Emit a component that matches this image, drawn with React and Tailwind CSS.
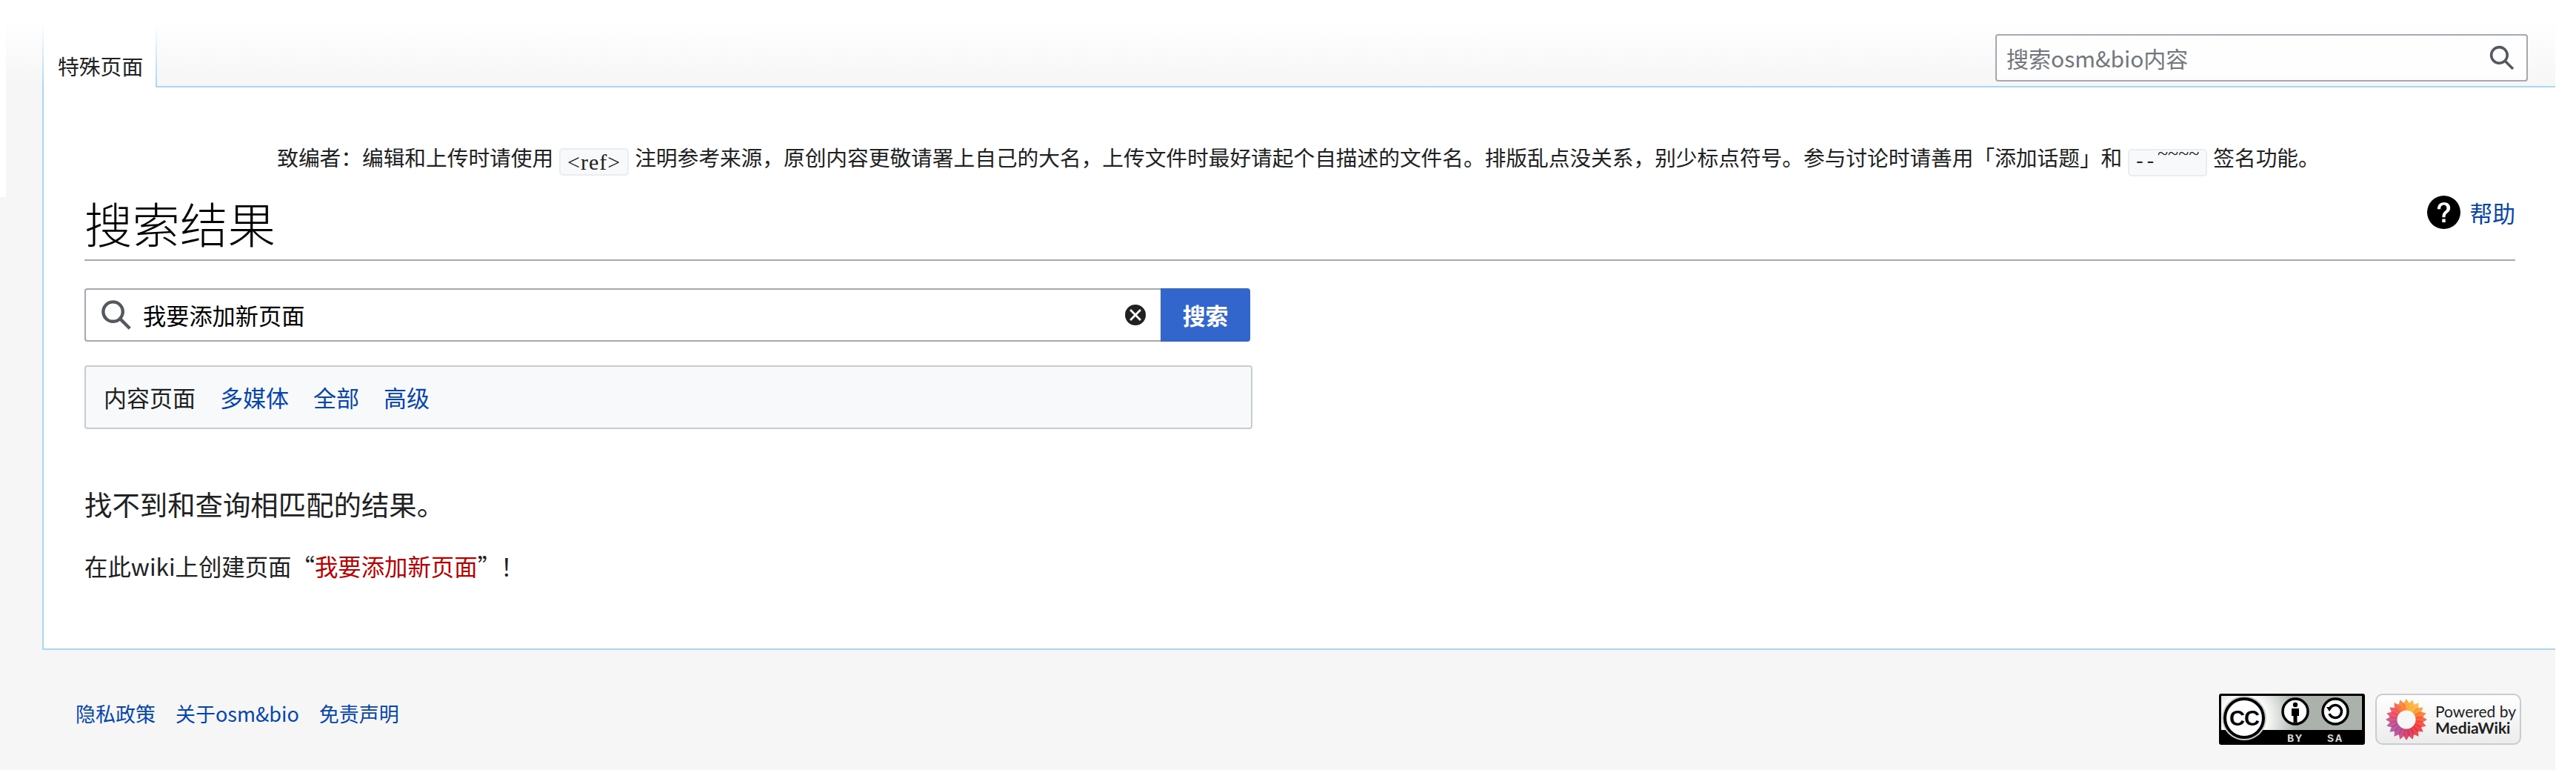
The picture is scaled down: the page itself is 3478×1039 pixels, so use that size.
const petalColors = [
  '#ff9a2e', '#ffac32', '#ffb23a', '#fb9a2c', '#f8742c', '#f5582f', '#f2433a', '#ee3640', '#e8343f', '#dd3350',
  '#d23460', '#c83f78', '#b9478f', '#ad4c99', '#b94a90', '#cc4a7f', '#e2476a', '#f04a55', '#f55c42', '#fa7a35',
]

// full width punctuation, kept as escapes
const colon = '\uFF1A'
const comma = '\uFF0C'
const bang = '\uFF01'

function SearchIcon({ className }) {
  return (
    <svg viewBox="0 0 20 20" className={className} fill="#54595d">
      <path d="M12.2 13.6a7 7 0 1 1 1.4-1.4l5.4 5.4-1.4 1.4zM3 8a5 5 0 1 0 10 0A5 5 0 0 0 3 8" />
    </svg>
  )
}

function CcBadge() {
  return (
    <svg viewBox="0 0 197 69" className="w-[197px] h-[69px]">
      <defs>
        <radialGradient id="ccglow" gradientUnits="userSpaceOnUse" cx="34" cy="33" r="72">
          <stop offset="0.4" stopColor="#ffffff" />
          <stop offset="1" stopColor="#aab2ab" />
        </radialGradient>
      </defs>
      <rect width="197" height="69" rx="3" fill="#000" />
      <rect x="3" y="3" width="190" height="46" fill="url(#ccglow)" />
      <circle cx="34" cy="33" r="30" fill="#c9cdc8" />
      <circle cx="34" cy="33" r="26" fill="#fff" stroke="#000" strokeWidth="4" />
      <text x="34" y="43" textAnchor="middle" fontFamily="Liberation Sans" fontWeight="700" fontSize="29" letterSpacing="-1" fill="#000">CC</text>
      <circle cx="103" cy="24" r="17" fill="#fff" stroke="#000" strokeWidth="3.5" />
      <circle cx="103" cy="15" r="3.2" fill="#000" />
      <path d="M98 20h10v10h-2.5v9h-5v-9H98z" fill="#000" />
      <circle cx="157" cy="24" r="17" fill="#fff" stroke="#000" strokeWidth="3.5" />
      <path d="M149 21a8.5 8.5 0 1 1 0 6" fill="none" stroke="#000" strokeWidth="3.5" />
      <path d="M145 18l8 0-4 6z" fill="#000" />
      <text x="103" y="65" textAnchor="middle" fontFamily="Liberation Mono" fontWeight="700" fontSize="15" letterSpacing="2" fill="#d8d8d8">BY</text>
      <text x="157" y="65" textAnchor="middle" fontFamily="Liberation Mono" fontWeight="700" fontSize="15" letterSpacing="2" fill="#d8d8d8">SA</text>
    </svg>
  )
}

function MediaWikiBadge() {
  return (
    <div className="w-[197px] h-[69px] flex items-center rounded-[10px] border-2 border-[#c8ccd1] bg-gradient-to-b from-white to-[#ececec] pl-[11px]">
      <svg viewBox="0 0 60 60" className="w-[58px] h-[58px] shrink-0">
        {petalColors.map((color, i) => (
          <path
            key={i}
            d="M30 1 L35 9 L33.5 18 L26.5 18 L25 9 Z"
            fill={color}
            fillOpacity="0.88"
            transform={`rotate(${i * 18} 30 30)`}
          />
        ))}
        <circle cx="30" cy="30" r="13" fill="#f7f7f7" />
      </svg>
      <div className="ml-[10px] font-['Lato',sans-serif] text-[#202122] whitespace-nowrap">
        <div className="text-[21px] leading-[23px]">Powered by</div>
        <div className="text-[21px] leading-[22px] font-bold">MediaWiki</div>
      </div>
    </div>
  )
}

function Code({ className, children }) {
  return (
    <code className={`inline-block h-[37px] leading-[33px] align-[-5px] mx-[8px] text-center border-2 border-[#eaecf0] rounded-[5px] bg-[#f8f9fa] font-['Liberation_Serif',serif] text-[#202122] ${className}`}>
      {children}
    </code>
  )
}

export default function App() {
  return (
    <div className="w-[3450px] h-[1039px] relative bg-[#f6f6f6] font-['Noto_Sans_CJK_SC',sans-serif] text-[#202122] text-[30.8px]">
      <div className="absolute top-0 left-0 w-2 h-[266px] bg-white" />

      <header className="flex h-[118px] pl-[57px] bg-gradient-to-b from-white from-[25px] to-[#f6f6f6] to-[116px]">
        <div className="w-[2px] mt-[30px] bg-gradient-to-b from-white to-[#a7d7f9]" />
        <div className="w-[151px] mt-[30px] h-[88px] bg-white pl-[19px] pt-[39px] text-[28.8px] leading-[40px]">特殊页面</div>
        <div className="flex-1 flex justify-end pr-[37px] pt-[46px] border-b-2 border-[#a7d7f9] relative">
          <div className="absolute left-0 top-[30px] bottom-0 w-[2px] bg-gradient-to-b from-white to-[#a7d7f9]" />
          <div className="w-[719px] h-[64px] flex items-center rounded-[4px] border-2 border-[#a2a9b1] bg-white/80 pl-[13px] pr-[15px]">
            <input
              placeholder="搜索osm&bio内容"
              readOnly
              className="flex-1 min-w-0 bg-transparent outline-none text-[30px] placeholder:text-[#72777d]"
            />
            <SearchIcon className="w-[36px] h-[36px]" />
          </div>
        </div>
      </header>

      <div className="ml-[57px] h-[759px] bg-white border-l-2 border-b-2 border-[#a7d7f9] pl-[55px] pr-[54px]">
        <div className="pt-[72px] h-[119px] text-center text-[28.7px] leading-[44px] pr-[4px] whitespace-nowrap">
          致编者{colon}编辑和上传时请使用<Code className="w-[94px] text-[30px] tracking-[1px]">&lt;ref&gt;</Code>注明参考来源{comma}原创内容更敬请署上自己的大名{comma}上传文件时最好请起个自描述的文件名。排版乱点没关系{comma}别少标点符号。参与讨论时请善用「添加话题」和<Code className="w-[107px] text-[28px]"><span className="relative top-[-4px] tracking-[5px]">--</span><sup className="text-[26px] top-[-14px]">~~~~</sup></Code>签名功能。
        </div>

        <div className="flex justify-between h-[115px] border-b-2 border-[#a2a9b1]">
          <h1 className="text-[64.5px] leading-[90px] font-light text-black pt-[18px]">搜索结果</h1>
          <a className="flex items-start gap-[12px] pt-[27px] text-[#0645ad]">
            <svg viewBox="0 0 20 20" className="w-[45px] h-[45px]" fill="#000">
              <path d="M10 0a10 10 0 1 0 10 10A10 10 0 0 0 10 0m1 16H9v-2h2zm2.71-7.6a2.6 2.6 0 0 1-.33.74 3.2 3.2 0 0 1-.48.55l-.54.48c-.21.18-.41.35-.58.52a2.5 2.5 0 0 0-.47.56A2.3 2.3 0 0 0 11 12a3.8 3.8 0 0 0-.11 1H9.08a8.9 8.9 0 0 1 .07-1.25 3.3 3.3 0 0 1 .25-.9 2.8 2.8 0 0 1 .41-.67 4 4 0 0 1 .58-.58c.17-.16.34-.3.51-.44a3 3 0 0 0 .43-.44 1.8 1.8 0 0 0 .3-.55 2 2 0 0 0 .11-.72 2.1 2.1 0 0 0-.17-.86 1.7 1.7 0 0 0-1-.9 1.7 1.7 0 0 0-.5-.1 1.77 1.77 0 0 0-1.53.68 3 3 0 0 0-.5 1.82H6.16a4.7 4.7 0 0 1 .28-1.68 3.6 3.6 0 0 1 .8-1.29 3.9 3.9 0 0 1 1.28-.83A4.6 4.6 0 0 1 10.18 4a4.8 4.8 0 0 1 1.44.23 3.4 3.4 0 0 1 1.15.65 3.1 3.1 0 0 1 .78 1.06 3.5 3.5 0 0 1 .29 1.45 3.4 3.4 0 0 1-.12 1.01z" />
            </svg>
            <span className="leading-[45px]">帮助</span>
          </a>
        </div>

        <div className="flex w-[1574px] h-[72px] mt-[37px]">
          <div className="flex-1 flex items-center border-2 border-r-0 border-[#a2a9b1] rounded-l-[4px] pl-[19px] pr-[20px] bg-white">
            <SearchIcon className="w-[44px] h-[44px] shrink-0" />
            <input
              value="我要添加新页面"
              readOnly
              className="flex-1 min-w-0 ml-[14px] outline-none text-black text-[31.2px]"
            />
            <svg viewBox="0 0 20 20" className="w-[28px] h-[28px] shrink-0" fill="#202122">
              <path d="M10 0a10 10 0 1 0 10 10A10 10 0 0 0 10 0m5.66 14.24-1.41 1.41L10 11.41l-4.24 4.24-1.42-1.41L8.59 10 4.34 5.76l1.42-1.42L10 8.59l4.24-4.24 1.41 1.41L11.41 10z" />
            </svg>
          </div>
          <button className="w-[121px] bg-[#36c] text-white font-bold rounded-r-[4px]">搜索</button>
        </div>

        <div className="flex items-center gap-[33px] w-[1577px] h-[86px] mt-[32px] pl-[24px] border-2 border-[#c8ccd1] rounded-[4px] bg-[#f8f9fa] text-[31px]">
          <span>内容页面</span>
          <a className="text-[#0645ad]">多媒体</a>
          <a className="text-[#0645ad]">全部</a>
          <a className="text-[#0645ad]">高级</a>
        </div>

        <p className="mt-[76px] text-[37.4px] leading-[50px]">找不到和查询相匹配的结果。</p>
        <p className="mt-[37px] text-[31.4px] leading-[44px]">
          在此wiki上创建页面“<a className="text-[#ba0000]">我要添加新页面</a>”{bang}
        </p>
      </div>

      <footer className="flex justify-between pl-[102px] pr-[46px] pt-[59px]">
        <ul className="flex gap-[27px] text-[27px] leading-[38px] text-[#0645ad] mt-[8px] h-[38px]">
          <li>隐私政策</li>
          <li>关于osm&amp;bio</li>
          <li>免责声明</li>
        </ul>
        <div className="flex gap-[14px]">
          <CcBadge />
          <MediaWikiBadge />
        </div>
      </footer>
    </div>
  )
}
